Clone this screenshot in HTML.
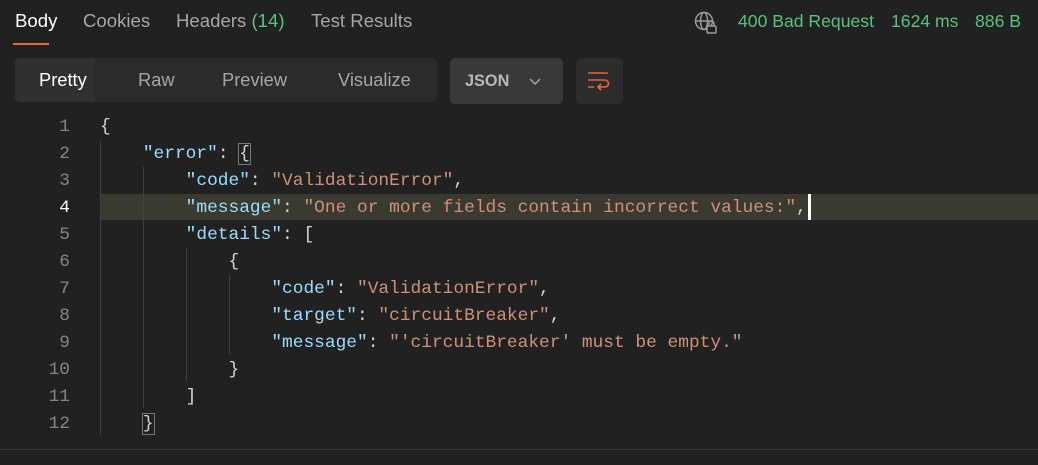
<!DOCTYPE html>
<html><head><style>
body{margin:0;width:1038px;height:465px;background:#212121;overflow:hidden;position:relative;font-family:"Liberation Sans",sans-serif}
.a{position:absolute;white-space:pre}
.tab{top:10px;font-size:18.6px;color:#a6a6a6}
.code{font-family:"Liberation Mono",monospace;font-size:17.85px;color:#d4d4d4;line-height:27px}
.k{color:#9cdcfe}.s{color:#ce9178}
.ln{position:absolute;left:20px;width:50px;text-align:right;font-family:"Liberation Mono",monospace;font-size:17.85px;color:#858585;line-height:27px}
.g{position:absolute;width:1px;background:#404040}
.tb{top:69px;font-size:18.3px;color:#a6a6a6}
</style></head><body>
<div class="a tab" style="left:15px;color:#fff">Body</div>
<div style="position:absolute;left:13px;top:43px;width:36px;height:2px;background:#e8673a"></div>
<div class="a tab" style="left:83px">Cookies</div>
<div class="a tab" style="left:176px">Headers <span style="color:#59c27c">(14)</span></div>
<div class="a tab" style="left:311px">Test Results</div>
<svg class="a" style="left:694px;top:11px" width="26" height="24" viewBox="0 0 26 24" fill="none" stroke="#9a9a9a" stroke-width="1.5"><circle cx="10" cy="10" r="8.5"/><ellipse cx="10" cy="10" rx="3.5" ry="8.5"/><line x1="1.5" y1="10" x2="18.5" y2="10"/><rect x="13" y="15" width="9" height="7" fill="#212121" rx="1"/><path d="M15 15v-2.5a2.5 2.5 0 0 1 5 0V15"/></svg>
<div class="a" style="left:738px;top:11px;font-size:17.6px;color:#59c27c">400 Bad Request</div>
<div class="a" style="left:891px;top:11px;font-size:17.6px;color:#59c27c">1624 ms</div>
<div class="a" style="left:975px;top:11px;font-size:17.6px;color:#59c27c">886 B</div>

<div style="position:absolute;left:15px;top:58px;width:422px;height:44px;background:#2b2b2b;border-radius:5px"></div>
<div style="position:absolute;left:15px;top:58px;width:78px;height:44px;background:#303030;border-radius:5px 0 0 5px"></div>
<div class="a tb" style="left:39px;color:#fff">Pretty</div>
<div class="a tb" style="left:138px">Raw</div>
<div class="a tb" style="left:222px">Preview</div>
<div class="a tb" style="left:338px">Visualize</div>
<div style="position:absolute;left:450px;top:58px;width:113px;height:46px;background:#393939;border-radius:5px"></div>
<div class="a" style="left:465px;top:72px;font-size:16.3px;font-weight:bold;color:#b8b8b8">JSON</div>
<svg class="a" style="left:528px;top:77px" width="14" height="10"><path d="M2 2l5 5 5-5" stroke="#a6a6a6" stroke-width="1.5" fill="none"/></svg>
<div style="position:absolute;left:576px;top:58px;width:47px;height:46px;background:#2c2c2c;border-radius:5px"></div>
<svg class="a" style="left:586px;top:70px" width="26" height="22" fill="none" stroke="#e8673a" stroke-width="1.6"><path d="M2 3h20M2 10h17a3.5 3.5 0 0 1 0 7h-6M15 14l-3 3 3 3M2 17h6"/></svg>

<div style="position:absolute;left:100px;top:194px;width:938px;height:26px;background:#3a3a30"></div>
<div style="position:absolute;left:808px;top:194px;width:3px;height:26px;background:#fff"></div>
<div class="g" style="left:100px;top:140px;height:295px"></div>
<div class="g" style="left:143px;top:167px;height:241px"></div>
<div class="g" style="left:186px;top:248px;height:133px"></div>
<div class="g" style="left:229px;top:275px;height:79px"></div>

<div class="ln" style="top:114px">1<br>2<br>3<br><span style="color:#fff">4</span><br>5<br>6<br>7<br>8<br>9<br>10<br>11<br>12</div>
<div class="a code" style="left:100px;top:114px">{
    <span class="k">"error"</span>: <span style="outline:1px solid #777">{</span>
        <span class="k">"code"</span>: <span class="s">"ValidationError"</span>,
        <span class="k">"message"</span>: <span class="s">"One or more fields contain incorrect values:"</span>,
        <span class="k">"details"</span>: [
            {
                <span class="k">"code"</span>: <span class="s">"ValidationError"</span>,
                <span class="k">"target"</span>: <span class="s">"circuitBreaker"</span>,
                <span class="k">"message"</span>: <span class="s">"'circuitBreaker' must be empty."</span>
            }
        ]
    <span style="outline:1px solid #777">}</span></div>
<div style="position:absolute;left:0;top:449px;width:1038px;height:1px;background:#333"></div>
<div style="position:absolute;left:0;top:450px;width:1038px;height:15px;background:#212121"></div>
</body></html>
